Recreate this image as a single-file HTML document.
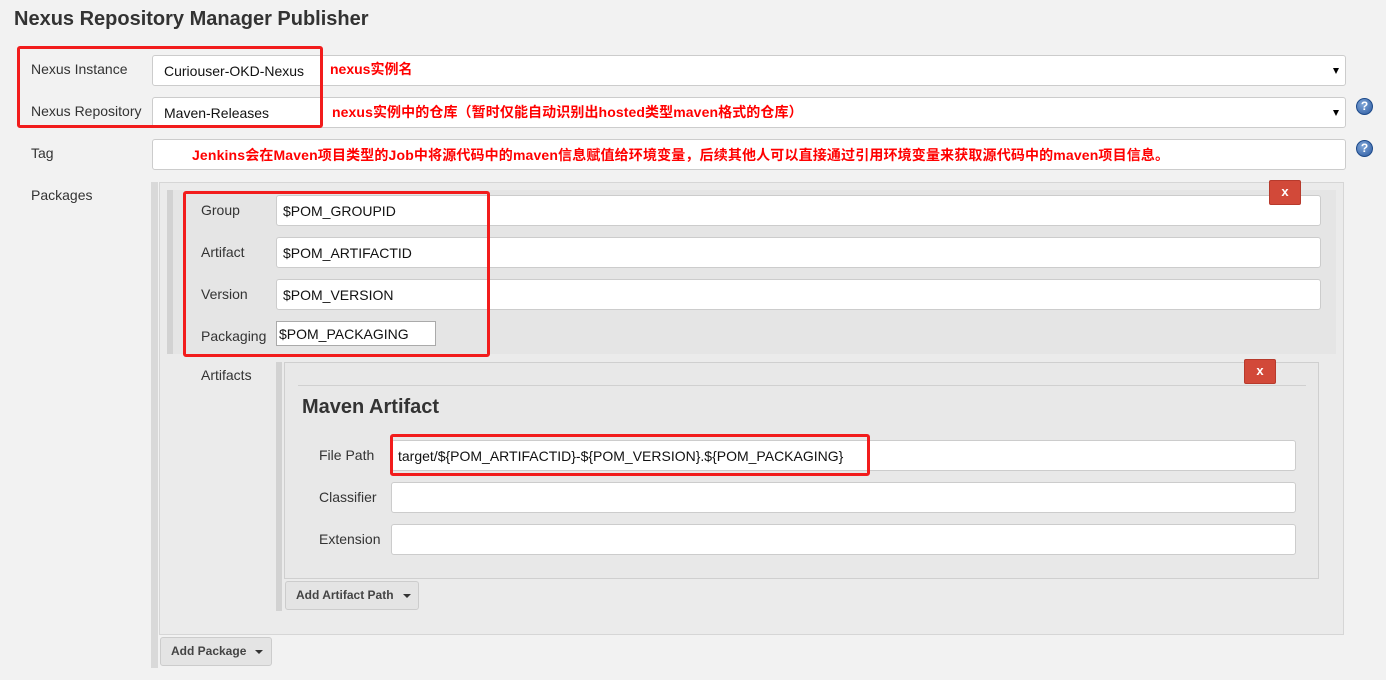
<!DOCTYPE html>
<html><head><meta charset="utf-8"><style>
*{box-sizing:border-box;margin:0;padding:0}
body{width:1386px;height:680px;background:#f2f2f2;font-family:"Liberation Sans","Noto Sans CJK SC",sans-serif;font-size:14px;color:#333;position:relative;overflow:hidden}
.a{position:absolute}
.lbl{position:absolute;font-size:14px;color:#333;line-height:16px}
.inp{position:absolute;background:#fff;border:1px solid #ccc;border-radius:3px;font-size:14px;color:#111;padding-left:6px;display:flex;align-items:center}
.red{position:absolute;border:3px solid #f21c1c;border-radius:3px;z-index:5}
.ann{position:absolute;color:#f00;font-weight:bold;font-size:14px;line-height:16px;white-space:nowrap}
.x{position:absolute;z-index:4;background:#d24939;border:1px solid #b73a2c;border-radius:2px;color:#fff;font-weight:bold;font-size:13px;text-align:center;line-height:22px}
.btn{position:absolute;background:#e4e4e4;border:1px solid #ccc;border-radius:3px;font-weight:bold;font-size:12px;color:#444;padding-left:10px;line-height:26px}
.caret{display:inline-block;width:0;height:0;border-left:4px solid transparent;border-right:4px solid transparent;border-top:4px solid #333;margin-left:9px;vertical-align:middle}
.help{position:absolute;width:17px;height:17px;border-radius:50%;background:radial-gradient(circle at 40% 35%,#7fa6d8,#2c5aa0);border:1px solid #1d4a8a;color:#fff;font-weight:bold;font-size:12px;text-align:center;line-height:15px}
.dd{position:absolute;right:6px;top:12px;width:0;height:0;border-left:3px solid transparent;border-right:3px solid transparent;border-top:6px solid #000}
</style></head><body>
<div class="a" style="left:14px;top:8px;font-size:20px;font-weight:bold;color:#333">Nexus Repository Manager Publisher</div>

<div class="lbl" style="left:31px;top:61px">Nexus Instance</div>
<div class="lbl" style="left:31px;top:103px">Nexus Repository</div>
<div class="lbl" style="left:31px;top:145px">Tag</div>
<div class="lbl" style="left:31px;top:187px">Packages</div>

<div class="inp" style="left:152px;top:55px;width:1194px;height:31px;padding-left:11px">Curiouser-OKD-Nexus<div class="dd"></div></div>
<div class="inp" style="left:152px;top:97px;width:1194px;height:31px;padding-left:11px">Maven-Releases<div class="dd"></div></div>
<div class="inp" style="left:152px;top:139px;width:1194px;height:31px"></div>
<div class="help" style="left:1356px;top:98px">?</div>
<div class="help" style="left:1356px;top:140px">?</div>

<div class="red" style="left:17px;top:46px;width:306px;height:82px"></div>
<div class="ann" style="left:330px;top:61px">nexus实例名</div>
<div class="ann" style="left:332px;top:104px;letter-spacing:0.1px">nexus实例中的仓库（暂时仅能自动识别出hosted类型maven格式的仓库）</div>
<div class="ann" style="left:192px;top:147px;letter-spacing:0.15px">Jenkins会在Maven项目类型的Job中将源代码中的maven信息赋值给环境变量，后续其他人可以直接通过引用环境变量来获取源代码中的maven项目信息。</div>

<div class="a" style="left:151px;top:182px;width:7px;height:486px;background:#d9d9d9"></div>
<div class="a" style="left:159px;top:182px;width:1185px;height:453px;background:#ebebeb;border:1px solid #d6d6d6"></div>
<div class="a" style="left:167px;top:190px;width:1169px;height:164px;background:#e5e5e5"></div>
<div class="a" style="left:167px;top:190px;width:6px;height:164px;background:#d2d2d2"></div>

<div class="lbl" style="left:201px;top:202px">Group</div>
<div class="lbl" style="left:201px;top:244px">Artifact</div>
<div class="lbl" style="left:201px;top:286px">Version</div>
<div class="lbl" style="left:201px;top:328px">Packaging</div>
<div class="inp" style="left:276px;top:195px;width:1045px;height:31px">$POM_GROUPID</div>
<div class="inp" style="left:276px;top:237px;width:1045px;height:31px">$POM_ARTIFACTID</div>
<div class="inp" style="left:276px;top:279px;width:1045px;height:31px">$POM_VERSION</div>
<div class="inp" style="left:276px;top:321px;width:160px;height:25px;border-color:#aaa;border-radius:0;padding-left:2px">$POM_PACKAGING</div>
<div class="x" style="left:1269px;top:180px;width:32px;height:25px">x</div>
<div class="red" style="left:183px;top:191px;width:307px;height:166px"></div>

<div class="lbl" style="left:201px;top:367px">Artifacts</div>
<div class="a" style="left:276px;top:362px;width:6px;height:249px;background:#d2d2d2"></div>
<div class="a" style="left:284px;top:362px;width:1035px;height:217px;background:#e8e8e8;border:1px solid #cfcfcf"></div>
<div class="a" style="left:298px;top:385px;width:1008px;height:1px;background:#d0d0d0"></div>
<div class="x" style="left:1244px;top:359px;width:32px;height:25px">x</div>
<div class="a" style="left:302px;top:396px;font-size:20px;font-weight:bold;color:#333">Maven Artifact</div>
<div class="lbl" style="left:319px;top:447px">File Path</div>
<div class="lbl" style="left:319px;top:489px">Classifier</div>
<div class="lbl" style="left:319px;top:531px">Extension</div>
<div class="inp" style="left:391px;top:440px;width:905px;height:31px">target/${POM_ARTIFACTID}-${POM_VERSION}.${POM_PACKAGING}</div>
<div class="inp" style="left:391px;top:482px;width:905px;height:31px"></div>
<div class="inp" style="left:391px;top:524px;width:905px;height:31px"></div>
<div class="red" style="left:390px;top:434px;width:480px;height:42px"></div>

<div class="btn" style="left:285px;top:581px;width:134px;height:29px">Add Artifact Path<span class="caret"></span></div>
<div class="btn" style="left:160px;top:637px;width:112px;height:29px">Add Package<span class="caret"></span></div>
</body></html>
